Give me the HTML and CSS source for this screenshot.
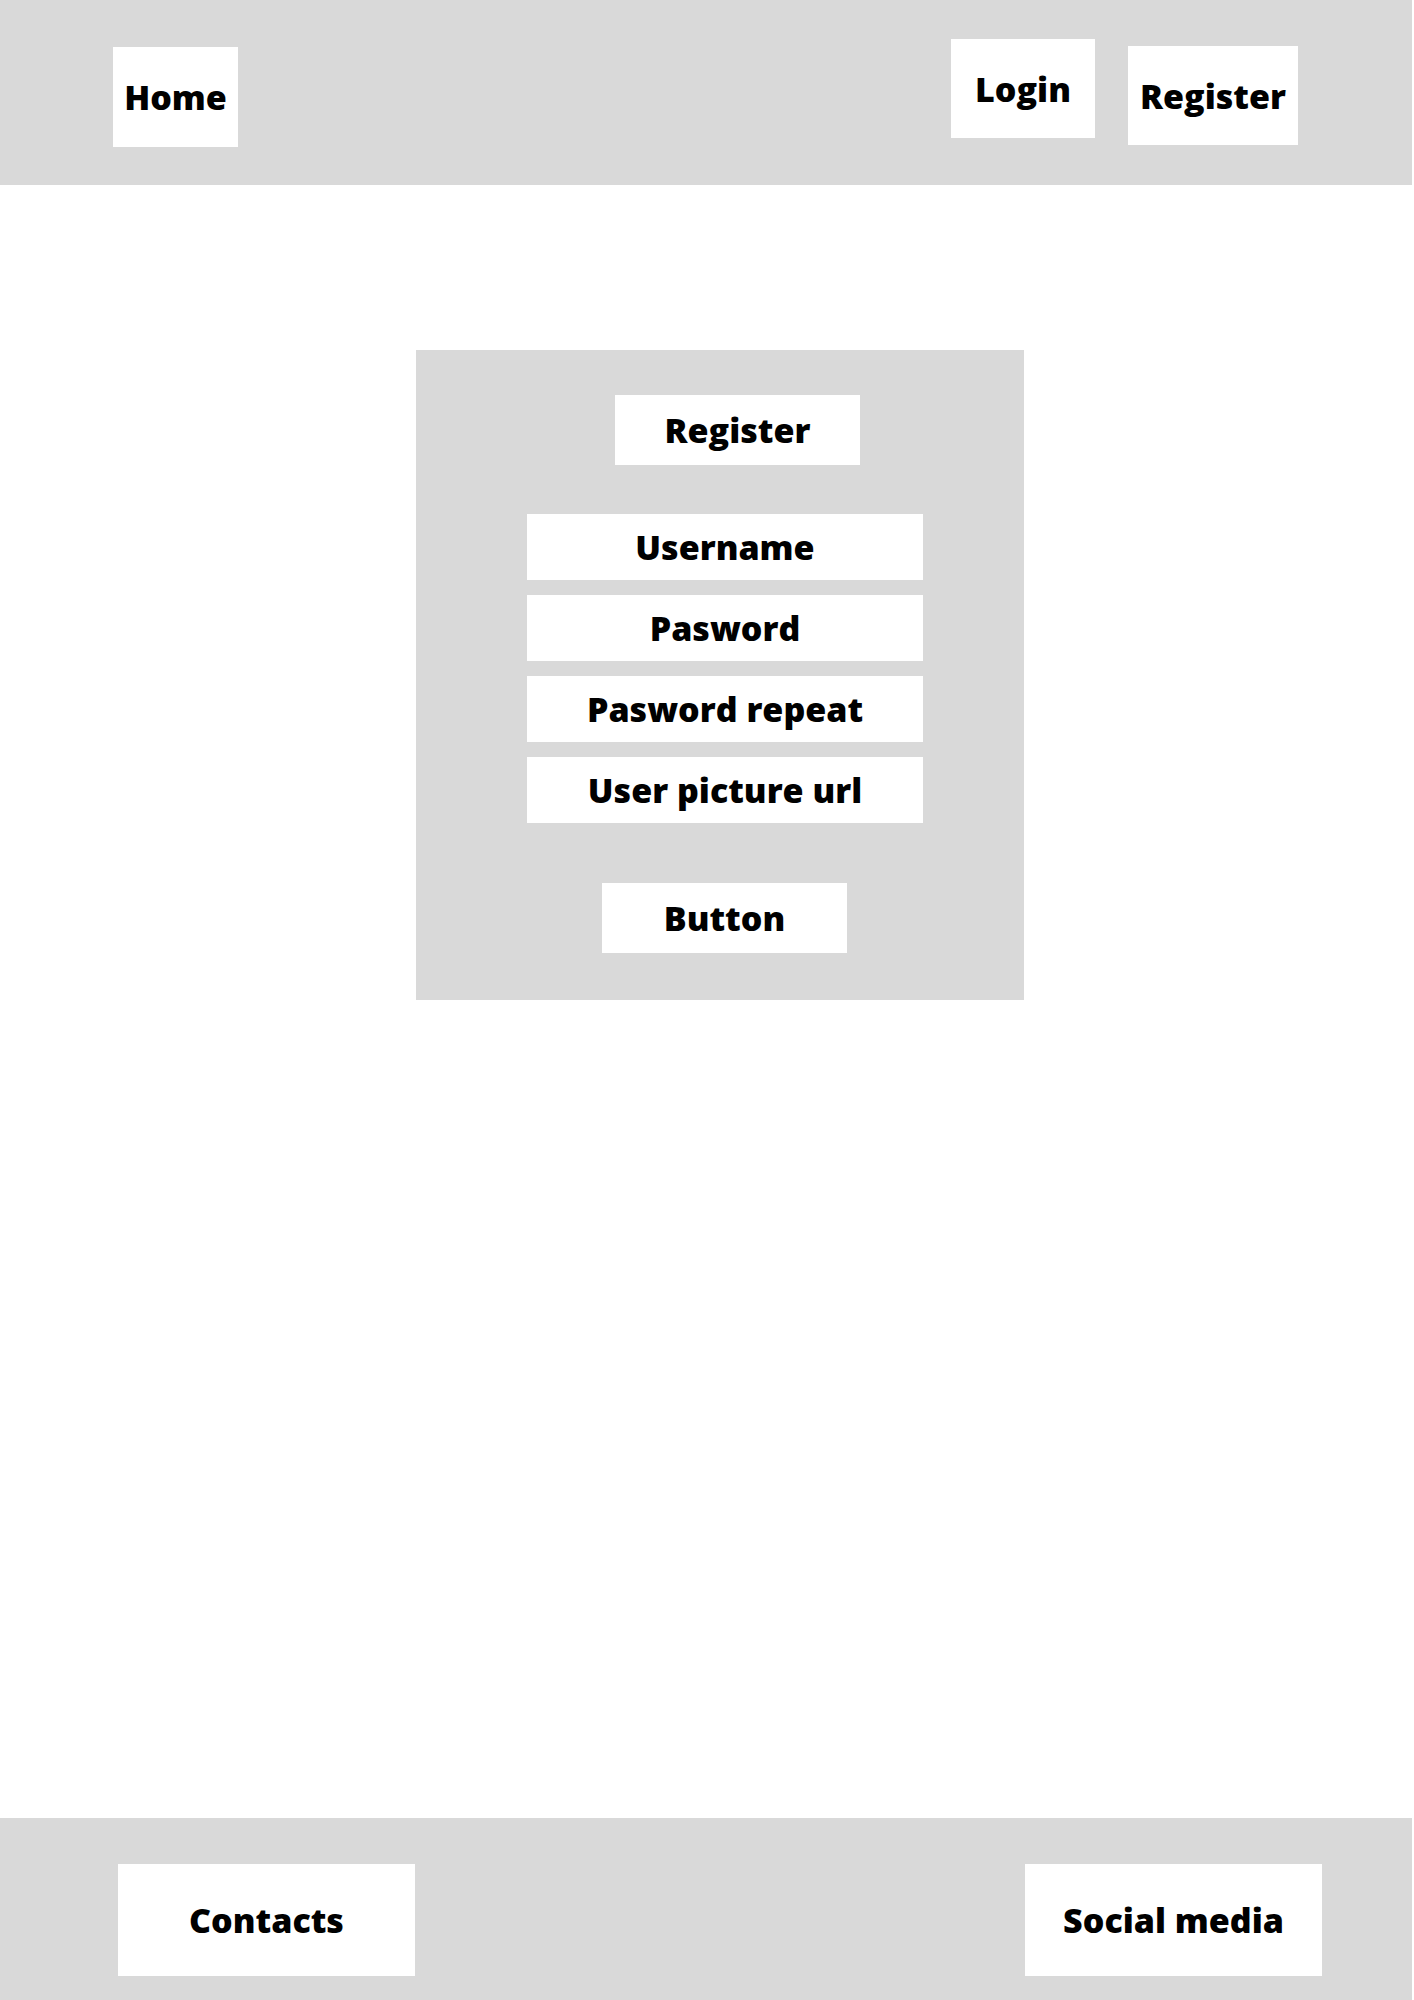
FILE: index.html
```html
<!DOCTYPE html>
<html lang="en">
<head>
    <meta charset="UTF-8">
    <meta name="viewport" content="width=device-width, initial-scale=1.0">
    <title>Register</title>
    <link rel="stylesheet" href="styles.css">
</head>
<body>
    <!-- Barra de navegacion -->
    <header class="topbar">
        <a href="#" class="box nav-home">Home</a>
        <a href="#" class="box nav-login">Login</a>
        <a href="#" class="box nav-register">Register</a>
    </header>

    <main class="content">
        <form class="card" action="#" method="POST">
            <h2 class="box card-title">Register</h2>
            <div class="fields">
                <input type="text" name="username" placeholder="Username">
                <input type="password" name="password" placeholder="Pasword">
                <input type="password" name="password_repeat" placeholder="Pasword repeat">
                <input type="url" name="picture" placeholder="User picture url">
            </div>
            <button type="submit" class="box card-button">Button</button>
        </form>
    </main>

    <footer class="bottombar">
        <a href="#" class="box foot-item">Contacts</a>
        <a href="#" class="box foot-item">Social media</a>
    </footer>
</body>
</html>
```

FILE: styles.css
```css
body {
    font-family: "Open Sans", "DejaVu Sans", sans-serif;
    font-weight: 800;
    font-size: 34px;
    color: #000;
    margin: 0;
    padding: 0;
    width: 1412px;
    min-height: 2000px;
    display: flex;
    flex-direction: column;
    background-color: #fff;
}

.box {
    background-color: #fff;
    color: #000;
    text-decoration: none;
    display: flex;
    justify-content: center;
    align-items: center;
    box-sizing: border-box;
}

/* Cabecera */
.topbar {
    background-color: #d9d9d9;
    height: 185px;
    display: flex;
    align-items: flex-start;
    padding: 0 114px 0 113px;
}

.nav-home {
    width: 125px;
    height: 100px;
    margin-top: 47px;
}

.nav-login {
    width: 144px;
    height: 99px;
    margin-top: 39px;
    margin-left: auto;
}

.nav-register {
    width: 170px;
    height: 99px;
    margin-top: 46px;
    margin-left: 33px;
}

/* Formulario */
.content {
    flex: 1;
    display: flex;
    align-items: flex-start;
    padding: 165px 0 0 416px;
}

.card {
    background-color: #d9d9d9;
    width: 608px;
    height: 650px;
    box-sizing: border-box;
    padding-top: 45px;
    display: flex;
    flex-direction: column;
    align-items: flex-start;
}

.card-title {
    font-size: 34px;
    font-weight: 800;
    margin: 0 0 0 199px;
    width: 245px;
    height: 70px;
}

.fields {
    display: flex;
    flex-direction: column;
    gap: 15px;
    margin: 49px 0 0 111px;
}

.fields input {
    width: 396px;
    height: 66px;
    border: none;
    padding: 0;
    margin: 0;
    background-color: #fff;
    font-family: inherit;
    font-weight: 800;
    font-size: 34px;
    text-align: center;
    outline: none;
}

.fields input::placeholder {
    color: #000;
    opacity: 1;
}

.card-button {
    width: 245px;
    height: 70px;
    margin: 60px 0 0 186px;
    border: none;
    padding: 0;
    font-family: inherit;
    font-weight: 800;
    font-size: 34px;
    cursor: pointer;
}

/* Pie de pagina */
.bottombar {
    background-color: #d9d9d9;
    height: 182px;
    display: flex;
    justify-content: space-between;
    align-items: flex-start;
    padding: 46px 90px 0 118px;
    box-sizing: border-box;
}

.foot-item {
    width: 297px;
    height: 112px;
}
```
